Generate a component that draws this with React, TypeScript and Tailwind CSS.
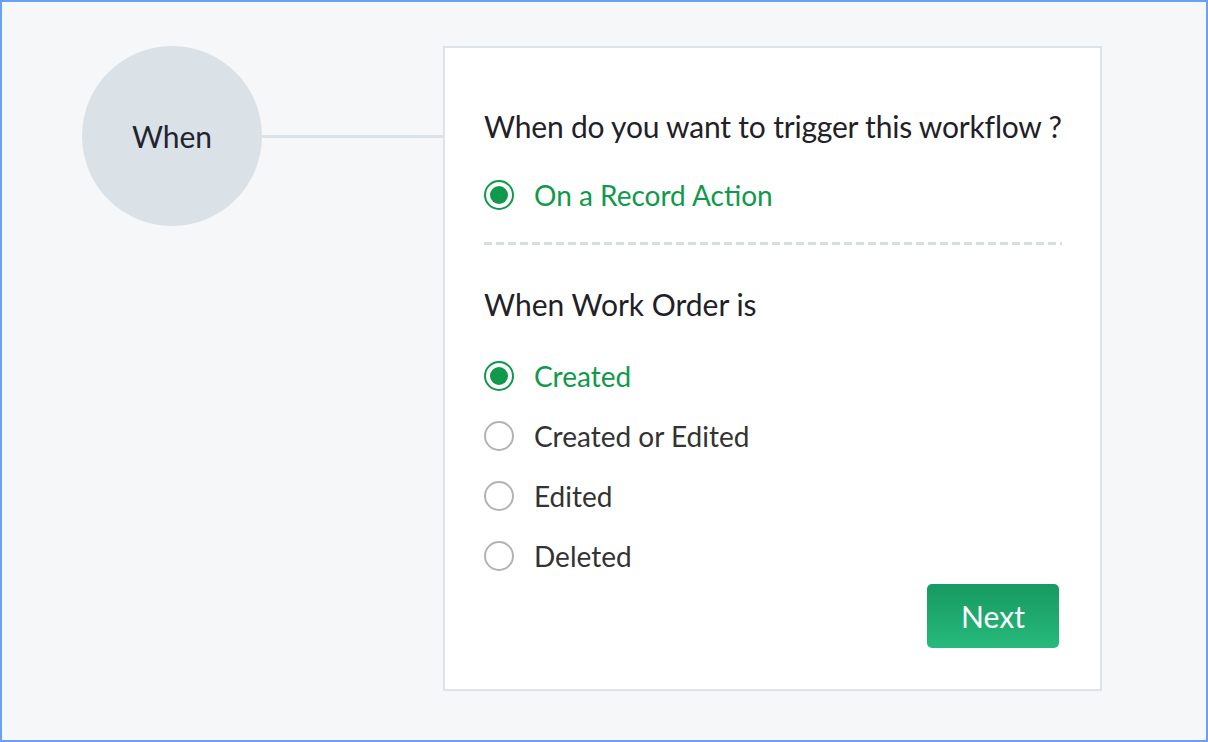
import React from "react";

function Radio({ checked }: { checked: boolean }) {
  return checked ? (
    <span className="flex h-[30px] w-[30px] shrink-0 items-center justify-center rounded-full border-2 border-[#0e9a4a] bg-white">
      <span className="h-[18px] w-[18px] rounded-full bg-[#0e9a4a]" />
    </span>
  ) : (
    <span className="h-[30px] w-[30px] shrink-0 rounded-full border-2 border-[#b3b3b3] bg-white" />
  );
}

function Option({ label, checked }: { label: string; checked: boolean }) {
  return (
    <div className="flex h-[60px] items-center gap-[20px] text-[28px]">
      <Radio checked={checked} />
      <span className={checked ? "text-[#0e9a4a]" : "text-[#333333]"}>{label}</span>
    </div>
  );
}

export default function App() {
  return (
    <div
      className="box-border h-[742px] w-[1208px] border-2 border-[#6aa1f6] bg-[#f5f7f9]"
      style={{ fontFamily: "Lato, 'Open Sans', sans-serif" }}
    >
      <div className="flex items-start pl-[80px] pt-[44px]">
        <div className="flex h-[180px] w-[180px] shrink-0 items-center justify-center rounded-full bg-[#dae2e7] text-[30px] text-[#1f2530]">
          When
        </div>
        <div className="mt-[89px] h-[3px] w-[181px] shrink-0 bg-[#dae2e7]" />
        <div className="box-border flex h-[645px] w-[659px] shrink-0 flex-col border-2 border-[#dde4e9] bg-white pl-[39px] pr-[40px]">
          <div className="mt-[60px] whitespace-nowrap text-[30px] leading-[36px] tracking-[-0.2px] text-[#1f2128]">
            When do you want to trigger this workflow ?
          </div>
          <div className="mt-[21px]">
            <Option label="On a Record Action" checked />
          </div>
          <div className="mt-[17px] h-[3px] w-[578px] bg-[repeating-linear-gradient(90deg,#d6dee4_0_8px,transparent_8px_12px)]" />
          <div className="mt-[41px] text-[30px] leading-[36px] text-[#1f2128]">When Work Order is</div>
          <div className="mt-[24px] flex flex-col">
            <Option label="Created" checked />
            <Option label="Created or Edited" checked={false} />
            <Option label="Edited" checked={false} />
            <Option label="Deleted" checked={false} />
          </div>
          <div className="flex justify-end pr-[1px]">
            <button className="mt-[-2px] h-[64px] w-[132px] rounded-[5px] bg-gradient-to-b from-[#169a61] to-[#27b97c] text-[30px] text-white">
              Next
            </button>
          </div>
        </div>
      </div>
    </div>
  );
}
